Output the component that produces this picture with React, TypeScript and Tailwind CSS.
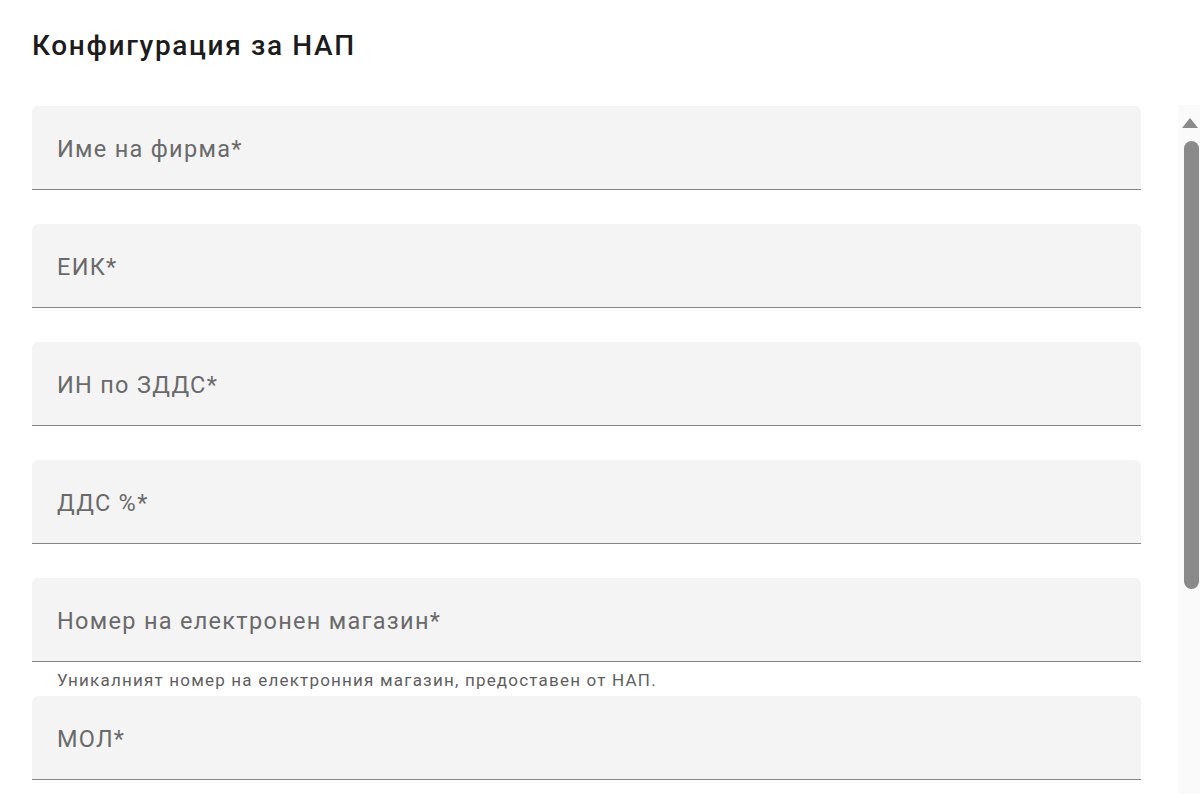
import React from 'react';

type Field = { label: string; helper?: string };

const fields: Field[] = [
    { label: 'Име на фирма*' },
    { label: 'ЕИК*' },
    { label: 'ИН по ЗДДС*' },
    { label: 'ДДС %*' },
    { label: 'Номер на електронен магазин*', helper: 'Уникалният номер на електронния магазин, предоставен от НАП.' },
    { label: 'МОЛ*' },
];

const FilledField: React.FC<Field> = ({ label, helper }) => (
    <div className="flex flex-col">
        <div className="h-[84px] bg-[#f4f4f4] rounded-t-[6px] border-b-[1.5px] border-[#858585] flex items-center pl-[25px] pt-[4px]">
            <span className="text-[23.5px] tracking-[1.3px] text-[#6a6a6a]">{label}</span>
        </div>
        <div className="h-[34px] pl-[25px] pt-[6px]">
            {helper && <p className="text-[17px] leading-[24px] tracking-[1.2px] text-[#5f5f5f]">{helper}</p>}
        </div>
    </div>
);

const Scrollbar: React.FC = () => (
    <div className="w-[22px] bg-[#fafafa] flex flex-col items-center pt-[13px]">
        <svg width="16" height="10" viewBox="0 0 16 10" className="ml-[1px]">
            <polygon points="8,0 16,10 0,10" fill="#8a8a8a" />
        </svg>
        <div className="mt-[13px] ml-[5px] w-[15px] h-[448px] rounded-full bg-[#8a8a8a]" />
    </div>
);

const App: React.FC = () => {
    return (
        <div className="w-[1200px] h-[794px] overflow-hidden bg-white" style={{ fontFamily: 'Roboto, "Noto Sans", sans-serif' }}>
            <h2 className="pl-[32px] pt-[28px] h-[105px] text-[28px] leading-[36px] tracking-[1.65px] font-medium text-[#1c1c1c]">
                Конфигурация за НАП
            </h2>
            <div className="flex h-[689px]">
                <div className="flex-1 pl-[32px] pr-[37px] pt-[1px] flex flex-col">
                    {fields.map(f => (
                        <FilledField key={f.label} {...f} />
                    ))}
                </div>
                <Scrollbar />
            </div>
        </div>
    );
};

export default App;
